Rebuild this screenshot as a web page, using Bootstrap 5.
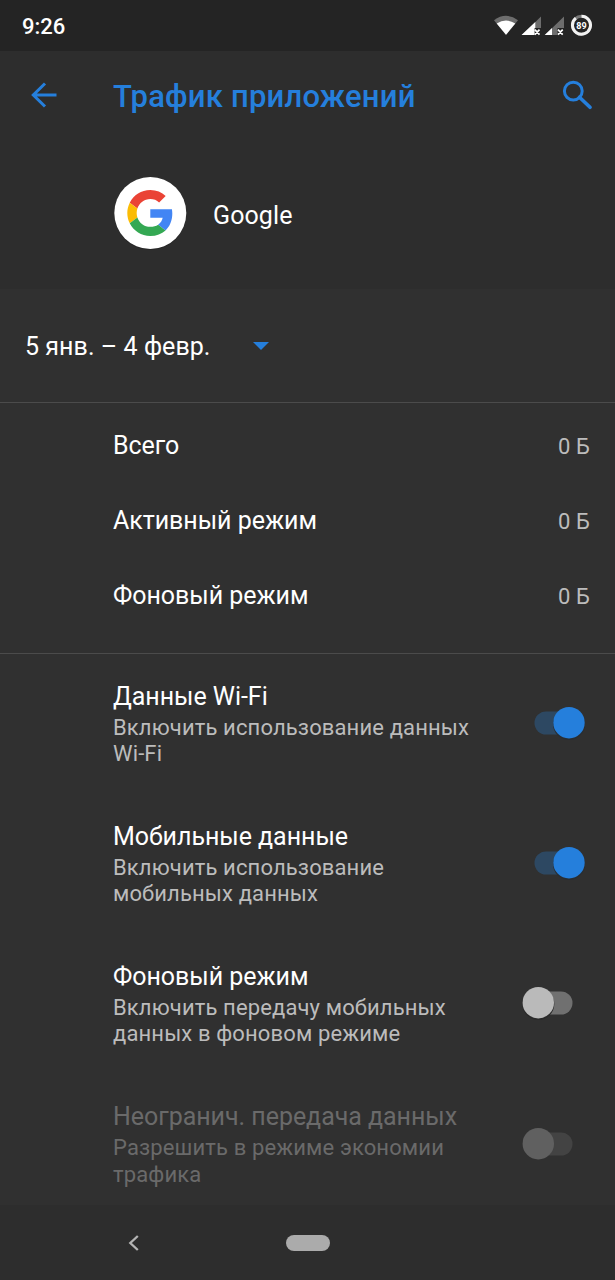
<!DOCTYPE html>
<html lang="ru" data-bs-theme="dark">
<head>
<meta charset="utf-8">
<meta name="viewport" content="width=device-width, initial-scale=1">
<title>Трафик приложений</title>
<link href="https://cdn.jsdelivr.net/npm/bootstrap@5.3.0/dist/css/bootstrap.min.css" rel="stylesheet">
<style>
body{font-family:Roboto,"Noto Sans",sans-serif;font-size:25px;line-height:30px;color:#fff;background:#303030;letter-spacing:-.04px}
svg{display:block;flex:none}
.screen{height:1280px;overflow:hidden}
.statusbar{height:51px;background:#242424;padding:2px 22px 0;font-size:22px;font-weight:500;letter-spacing:0}
.status-icons{margin:-2px 1px 0 0}
.head{height:238px;background:#2d2d2d}
.appbar{height:88px;padding-left:31px;padding-right:23px;color:#257fdc}
.appbar h1{color:inherit;font-size:31px;font-weight:500;line-height:36px;margin-left:56px;padding-top:4px;letter-spacing:.2px}
.app-row{padding:37px 0 0 113px;gap:26px}
.app-name{padding-top:6px;letter-spacing:.1px}
.period{height:114px;padding-left:25px;gap:43px;border-bottom:1px solid #4b4b4b}
.period span{padding-top:2px;letter-spacing:.05px}
.stats{height:251px;padding-top:5px;border-bottom:1px solid #4b4b4b}
.stat{height:75px;padding:0 25px 0 113px}
.amount{font-size:22px;color:#bcbcbc;padding-top:2px;letter-spacing:.1px}
.setting{height:140.25px;padding:27.7px 28px 0 113px}
.setting p{width:370px;margin-top:3px;font-size:22px;line-height:26.3px;color:#bcbcbc;letter-spacing:.13px}
.setting.off-limits{color:#6a6a6a}
.setting.off-limits p{color:#6a6a6a}
.toggle{margin-top:21.3px}
.navbtns{height:75px;background:#2d2d2d;padding-left:128px}
.home-pill{width:44px;height:16px;margin-left:147px;background:#ababab}
</style>
</head>
<body>
<div class="screen d-flex flex-column">
  <div class="statusbar d-flex align-items-center justify-content-between flex-shrink-0">
    <span>9:26</span>
    <svg class="status-icons" width="100" height="26" viewBox="492 13 100 26">
      <path d="M494 20.200Q506 11.500 518 20.200L506 35Z" fill="#6d6d6d"/>
      <path d="M496.700 23.500Q506 17.500 515.300 23.500L506 34.800Z" fill="#fff"/>
      <path d="M541 16.500V28H534.500V35H522Z" fill="#6d6d6d"/>
      <path d="M535.300 22V28H534.500V35H521.500Z" fill="#fff"/>
      <path d="M564 16.500V28H557.500V35H545Z" fill="#6d6d6d"/>
      <path d="M552 28V35H544.700Z" fill="#fff"/>
      <path d="M534.800 29.700L539.500 34.700M539.500 29.700L534.800 34.700M558 29.700L562.700 34.700M562.700 29.700L558 34.700" stroke="#fff" stroke-width="1.700"/>
      <circle cx="581.500" cy="25.200" r="9" fill="none" stroke="#777" stroke-width="3"/>
      <path d="M581.500 16.200A9 9 0 1 1 575.800 18.200" fill="none" stroke="#f2f2f2" stroke-width="3"/>
      <text x="581.500" y="28.500" text-anchor="middle" font-size="9" font-weight="700" fill="#fff">89</text>
    </svg>
  </div>

  <header class="head flex-shrink-0">
    <div class="appbar d-flex align-items-center">
      <svg width="26" height="26" viewBox="0 0 26 26" fill="none" stroke="currentColor" stroke-width="3"><path d="M25.500 13H3M14 1.500L2.300 13L14 24.500"/></svg>
      <h1 class="mb-0">Трафик приложений</h1>
      <svg class="ms-auto" width="30" height="30" viewBox="0 0 30 30" fill="none" stroke="currentColor"><circle cx="11.300" cy="11.100" r="8.900" stroke-width="3"/><path d="M17.500 17.200L28 27.300" stroke-width="3.600" stroke-linecap="round"/></svg>
    </div>
    <div class="app-row d-flex align-items-center">
      <svg width="74" height="74" viewBox="0 0 74 74">
        <circle cx="37.300" cy="38" r="36" fill="#252525"/>
        <circle cx="37.300" cy="37" r="36" fill="#fff"/>
        <g transform="translate(14.300 14) scale(.958)">
          <path fill="#EA4335" d="M24 9.500c3.540 0 6.710 1.220 9.210 3.600l6.850-6.850C35.900 2.380 30.470 0 24 0 14.620 0 6.510 5.380 2.560 13.220l7.980 6.190C12.430 13.720 17.740 9.500 24 9.500z"/>
          <path fill="#4285F4" d="M46.980 24.550c0-1.570-.15-3.090-.38-4.550H24v9.020h12.940c-.58 2.960-2.260 5.480-4.780 7.180l7.730 6c4.510-4.180 7.090-10.360 7.090-17.650z"/>
          <path fill="#FBBC05" d="M10.530 28.590c-.48-1.450-.76-2.990-.76-4.590s.27-3.140.76-4.590l-7.980-6.190C.92 16.460 0 20.120 0 24c0 3.880.92 7.540 2.560 10.780l7.970-6.190z"/>
          <path fill="#34A853" d="M24 48c6.480 0 11.930-2.130 15.890-5.810l-7.730-6c-2.150 1.450-4.920 2.300-8.160 2.300-6.260 0-11.570-4.220-13.470-9.910l-7.980 6.190C6.510 42.620 14.620 48 24 48z"/>
        </g>
      </svg>
      <span class="app-name">Google</span>
    </div>
  </header>

  <div class="period d-flex align-items-center flex-shrink-0">
    <span>5 янв. – 4 февр.</span>
    <svg width="16" height="8" viewBox="0 0 16 8"><path d="M0 0H16L8 8Z" fill="#257fdc"/></svg>
  </div>

  <section class="stats flex-shrink-0">
    <div class="stat d-flex align-items-center justify-content-between"><span>Всего</span><span class="amount">0 Б</span></div>
    <div class="stat d-flex align-items-center justify-content-between"><span>Активный режим</span><span class="amount">0 Б</span></div>
    <div class="stat d-flex align-items-center justify-content-between"><span>Фоновый режим</span><span class="amount">0 Б</span></div>
  </section>

  <main class="flex-grow-1 overflow-hidden">
    <div class="setting d-flex justify-content-between">
      <div><div>Данные Wi-Fi</div><p class="mb-0">Включить использование данных<br>Wi-Fi</p></div>
      <svg class="toggle" width="66" height="40" viewBox="0 0 66 40"><rect x="13.500" y="8.500" width="40" height="23" rx="11.500" fill="#2d4862"/><circle cx="48" cy="21" r="16" fill="#292d31"/><circle cx="48" cy="19.700" r="15.700" fill="#257fdc"/></svg>
    </div>
    <div class="setting d-flex justify-content-between">
      <div><div>Мобильные данные</div><p class="mb-0">Включить использование<br>мобильных данных</p></div>
      <svg class="toggle" width="66" height="40" viewBox="0 0 66 40"><rect x="13.500" y="8.500" width="40" height="23" rx="11.500" fill="#2d4862"/><circle cx="48" cy="21" r="16" fill="#292d31"/><circle cx="48" cy="19.700" r="15.700" fill="#257fdc"/></svg>
    </div>
    <div class="setting d-flex justify-content-between">
      <div><div>Фоновый режим</div><p class="mb-0">Включить передачу мобильных<br>данных в фоновом режиме</p></div>
      <svg class="toggle" width="66" height="40" viewBox="0 0 66 40"><rect x="11.500" y="8.500" width="40" height="23" rx="11.500" fill="#707070"/><circle cx="17.300" cy="21" r="16" fill="#292929"/><circle cx="17.300" cy="19.700" r="15.700" fill="#bababa"/></svg>
    </div>
    <div class="setting off-limits d-flex justify-content-between">
      <div><div>Неогранич. передача данных</div><p class="mb-0">Разрешить в режиме экономии<br>трафика</p></div>
      <svg class="toggle" width="66" height="40" viewBox="0 0 66 40"><rect x="11.500" y="8.500" width="40" height="23" rx="11.500" fill="#434343"/><circle cx="17.300" cy="19.700" r="15.700" fill="#606060"/></svg>
    </div>
  </main>

  <nav class="navbtns d-flex align-items-center flex-shrink-0">
    <svg width="11" height="16" viewBox="0 0 11 16" fill="none" stroke="#b4b4b4" stroke-width="2.300"><path d="M9.800 1L2.300 8L9.800 15"/></svg>
    <div class="home-pill rounded-pill"></div>
  </nav>
</div>
<script src="https://cdn.jsdelivr.net/npm/bootstrap@5.3.0/dist/js/bootstrap.bundle.min.js"></script>
</body>
</html>
